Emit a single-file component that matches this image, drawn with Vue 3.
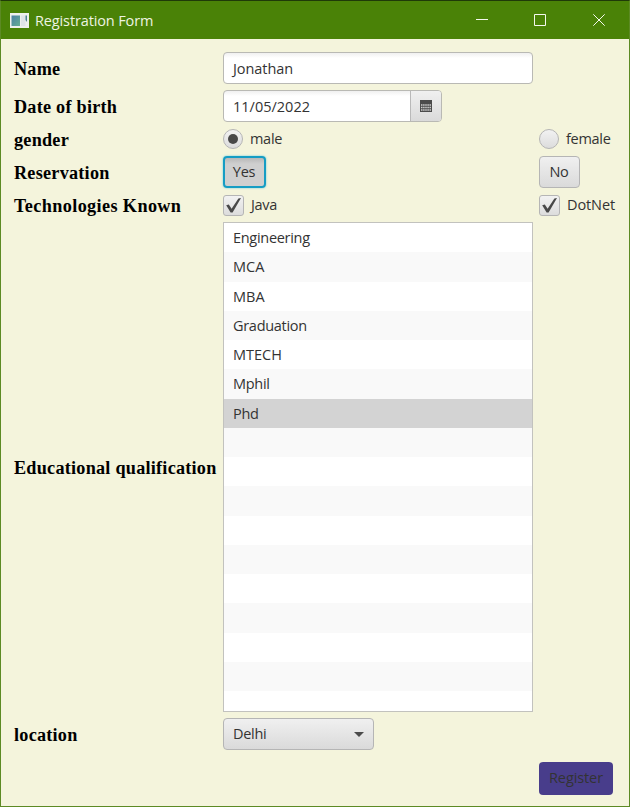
<script setup>
import { ref } from 'vue'

const name = ref('Jonathan')
const birthDate = ref('11/05/2022')
const gender = ref('male')
const reservation = ref('Yes')
const java = ref(true)
const dotnet = ref(true)
const selected = ref('Phd')
const qualifications = ['Engineering', 'MCA', 'MBA', 'Graduation', 'MTECH', 'Mphil', 'Phd']
const rows = Array.from({ length: 17 }, (_, i) => qualifications[i] || '')
const pick = (row) => { if (row) selected.value = row }
</script>

<template>
  <div class="window">
    <header class="titlebar">
      <svg class="app-icon" width="19" height="15" viewBox="0 0 19 15">
        <defs>
          <linearGradient id="pane" x1="0" y1="0" x2="1" y2="1">
            <stop offset="0" stop-color="#4b80a4" />
            <stop offset="1" stop-color="#66ae96" />
          </linearGradient>
        </defs>
        <rect width="19" height="15" fill="#eef0ee" />
        <rect x="1.5" y="2.5" width="8.5" height="10.5" fill="url(#pane)" />
        <rect x="11" y="2.5" width="4.5" height="10.5" fill="#dfe4e8" />
        <path d="M15.5 2.5h1.5v6.5l-1.5-2z" fill="#4d8190" />
      </svg>
      <span class="title">Registration Form</span>
      <svg class="control" width="12" height="12" viewBox="0 0 12 12"><path d="M0 5.5h12" /></svg>
      <svg class="control" width="12" height="12" viewBox="0 0 12 12"><path d="M.5.5h11v11h-11z" /></svg>
      <svg class="control close" width="12" height="12" viewBox="0 0 12 12"><path d="M.3.3l11.4 11.4M11.7.3L.3 11.7" /></svg>
    </header>

    <main class="form">
      <span class="label">Name</span>
      <div class="field wide"><span class="name-text">{{ name }}</span></div>
      <span></span>

      <span class="label">Date of birth</span>
      <div class="field date">
        <span class="date-text">{{ birthDate }}</span>
        <button class="calendar" aria-label="Choose date">
          <svg width="12" height="12" viewBox="0 0 12 12">
            <rect width="12" height="12" fill="#4b4b4b" />
            <path d="M1 5h10M1 7.5h10M1 10h10" stroke="#d0d0d0" stroke-width="1.3" stroke-dasharray="1.5 .62" />
          </svg>
        </button>
      </div>
      <span></span>

      <span class="label">gender</span>
      <div class="choice" @click="gender = 'male'">
        <i class="radio"><b v-if="gender === 'male'" class="dot"></b></i>
        <span>male</span>
      </div>
      <div class="choice" @click="gender = 'female'">
        <i class="radio"><b v-if="gender === 'female'" class="dot"></b></i>
        <span>female</span>
      </div>

      <span class="label">Reservation</span>
      <button class="toggle yes" :class="{ pressed: reservation === 'Yes' }" @click="reservation = 'Yes'">Yes</button>
      <button class="toggle no" :class="{ pressed: reservation === 'No' }" @click="reservation = 'No'">No</button>

      <span class="label tech-label">Technologies Known</span>
      <div class="choice" @click="java = !java">
        <i class="box"><svg v-if="java" width="15" height="15" viewBox="0 0 15 15"><path d="M.2 7.2L2.8 6.4 5.6 10.8 12.4.4 15 0 6.6 14.6H4.6z" /></svg></i>
        <span>Java</span>
      </div>
      <div class="choice" @click="dotnet = !dotnet">
        <i class="box"><svg v-if="dotnet" width="15" height="15" viewBox="0 0 15 15"><path d="M.2 7.2L2.8 6.4 5.6 10.8 12.4.4 15 0 6.6 14.6H4.6z" /></svg></i>
        <span class="dotnet-text">DotNet</span>
      </div>

      <span class="label">Educational qualification</span>
      <div class="list">
        <div v-for="(row, i) in rows" :key="i" class="row" :class="{ chosen: row && row === selected, caps: row && row === row.toUpperCase() }" @click="pick(row)">{{ row }}</div>
      </div>
      <span></span>

      <span class="label">location</span>
      <div class="combo">
        <span>Delhi</span>
        <svg width="10" height="5" viewBox="0 0 10 5"><path d="M0 0h10L5 5z" /></svg>
      </div>
      <span></span>

      <button class="register">Register</button>
    </main>
  </div>
</template>

<style>
body { margin: 0; }
</style>

<style scoped>
.window {
  box-sizing: border-box;
  width: 630px;
  height: 807px;
  border: 1px solid #5c8a24;
  border-top-color: #1f3a08;
  background: #f4f4dc;
  color: #333;
  font: 14.5px/20px "Open Sans", "Noto Sans", sans-serif;
  letter-spacing: -0.3px;
}
.titlebar {
  display: flex;
  align-items: center;
  box-sizing: border-box;
  height: 38px;
  padding: 0 24px 0 9px;
  background: #4a8207;
  color: #eef4e2;
}
.title { flex: 1; margin-left: 6px; padding-top: 2px; letter-spacing: -0.13px; }
.control { margin-left: 46px; fill: none; stroke: #f4f8ee; stroke-width: 1; }
.close { margin-left: 47px; }
.form {
  display: grid;
  grid-template-columns: 203px 310px 1fr;
  grid-template-rows: 32px 32px 22px 32px 22px 490px 32px 39px;
  gap: 6px;
  align-items: center;
  padding: 13px 0 0 13px;
}
.label {
  padding-top: 2px;
  color: #000;
  font: bold 18.2px/22px "Liberation Serif", serif;
  letter-spacing: 0.24px;
  white-space: nowrap;
}
.tech-label { letter-spacing: 0.38px; }
.field {
  display: flex;
  align-items: center;
  box-sizing: border-box;
  height: 32px;
  padding-left: 9px;
  border: 1px solid #b9b9b4;
  border-radius: 4px;
  background: linear-gradient(#f0f0f0, #fff 5px);
}
.name-text { padding-top: 2px; letter-spacing: -0.05px; }
.date { width: 219px; }
.date-text { flex: 1; padding-top: 2px; letter-spacing: 0; }
.calendar {
  display: flex;
  align-items: center;
  justify-content: center;
  width: 31px;
  height: 30px;
  padding: 0;
  border: 0;
  border-left: 1px solid #b9b9b9;
  border-radius: 0 3px 3px 0;
  background: linear-gradient(#f0f0f0, #dadada);
}
.choice { display: flex; align-items: center; gap: 7px; }
.radio, .box {
  display: flex;
  align-items: center;
  justify-content: center;
  box-sizing: border-box;
  border: 1px solid #b5b5b5;
  background: linear-gradient(#f2f2f2, #dcdcdc);
}
.radio { width: 20px; height: 20px; border-radius: 50%; }
.dot { width: 10px; height: 10px; border-radius: 50%; background: #484848; }
.box { width: 21px; height: 21px; border-radius: 3px; }
.box path { fill: #484848; }
.dotnet-text { letter-spacing: -0.1px; }
.toggle {
  justify-self: start;
  height: 32px;
  padding: 0 1px 0 0;
  border: 1px solid #b5b5b5;
  border-radius: 4px;
  background: linear-gradient(#f0f0f0, #dadada);
  color: #333;
  font: inherit;
  letter-spacing: inherit;
}
.yes { width: 43px; }
.no { width: 41px; }
.pressed {
  border: 2px solid #159dc4;
  background: linear-gradient(#b8b8b8, #cfcfcf 6px, #cfcfcf);
  box-shadow: 0 0 2px #55c5e0;
}
.list {
  box-sizing: border-box;
  height: 490px;
  overflow: hidden;
  border: 1px solid #c2c2be;
  background: #fff;
}
.row { height: 29.25px; padding-left: 9px; line-height: 29.25px; }
.row.caps { letter-spacing: 0; }
.row:nth-child(even) { background: #f9f9f9; }
.row.chosen { background: #d3d3d3; }
.combo {
  display: flex;
  align-items: center;
  justify-content: space-between;
  box-sizing: border-box;
  width: 151px;
  height: 32px;
  padding: 0 9px;
  border: 1px solid #b5b5b5;
  border-radius: 4px;
  background: linear-gradient(#f0f0f0, #dadada);
}
.combo path { fill: #4b4b4b; }
.register {
  grid-column: 3;
  align-self: end;
  justify-self: start;
  width: 74px;
  height: 33px;
  padding: 0 0 2px;
  border: 0;
  border-radius: 4px;
  background: #483d8b;
  color: #333;
  font: inherit;
  letter-spacing: -0.1px;
}
</style>
